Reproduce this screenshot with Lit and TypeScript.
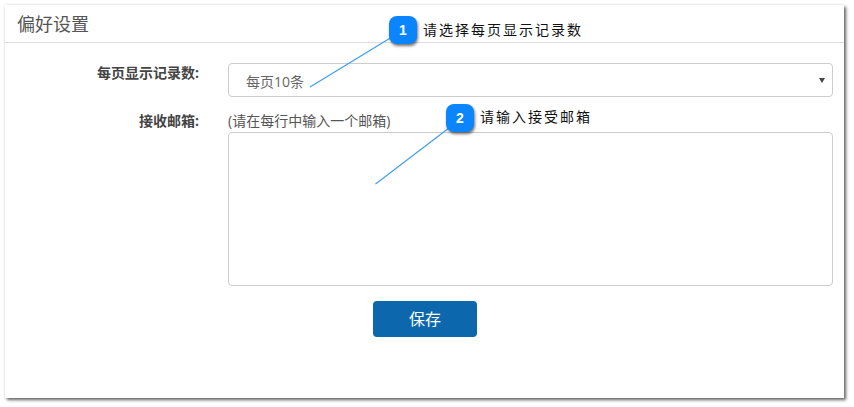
import { LitElement, html, css } from "lit";
import { customElement } from "lit/decorators.js";

@customElement("app-root")
export class AppRoot extends LitElement {
  static styles = css`
    :host { display: block; width: 854px; height: 407px; background: #fff; position: relative; overflow: hidden;
      font-family: "Open Sans", "Liberation Sans", "Noto Sans CJK SC", sans-serif; }
    .page { padding: 5px 10px 9px 5px; box-sizing: border-box; height: 407px; display: flex; }
    .card { flex: 1; background: #fff; box-shadow: 2px 2px 3px rgba(0,0,0,.6), 0 0 3px rgba(0,0,0,.12); display: flex; flex-direction: column; }
    .head { height: 38px; box-sizing: border-box; border-bottom: 1px solid #ddd; padding-left: 12px; font-size: 18px; line-height: 38px; color: #555; }
    .form { display: grid; grid-template-columns: 194px 605px; column-gap: 29px; padding-top: 20px; color: #333; font-size: 14px; }
    .label { font-weight: 700; text-align: right; color: #444; line-height: 20px; font-size: 14px; }
    .l2 { padding-top: 14px; }
    .select { height: 34px; box-sizing: border-box; border: 1px solid #ccc; border-radius: 4px; padding: 1px 7px 0 17px; color: #666; display: flex; justify-content: space-between; align-items: center; }
    .arrow { width: 0; height: 0; margin-top: -1px; border-left: 3px solid transparent; border-right: 3px solid transparent; border-top: 5px solid #444; }
    .hint { margin-top: 14px; height: 21px; line-height: 20px; color: #555; font-size: 14px; }
    .area { height: 154px; box-sizing: border-box; border: 1px solid #ccc; border-radius: 4px; }
    .actions { grid-column: 1 / 3; padding: 15px 0 0 368px; }
    .btn { display: block; width: 104px; height: 36px; box-sizing: border-box; background: #0d67ad; border: 0; border-radius: 4px; color: #fff; font: inherit; font-size: 16px; padding: 0 0 2px; }
    .lines { position: absolute; inset: 0; width: 854px; height: 407px; pointer-events: none; }
    .badge { position: absolute; width: 28px; height: 28px; box-sizing: border-box; border-radius: 8px; background: #0a84ff; color: #fff; font: 700 14px/28px "Liberation Sans", sans-serif; text-align: center; box-shadow: 1px 2px 3px rgba(0,0,0,.55); }
    .b1 { left: 389px; top: 16px; }
    .b2 { left: 446px; top: 104px; }
    .note { position: absolute; font-size: 14px; letter-spacing: 2px; color: #111; line-height: 20px; white-space: nowrap; }
    .n1 { left: 423px; top: 20px; }
    .n2 { left: 480px; top: 107px; }
  `;
  render() {
    return html`
      <div class="page">
        <div class="card">
          <div class="head">偏好设置</div>
          <div class="form">
            <div class="label">每页显示记录数:</div>
            <div class="select"><span>每页10条</span><i class="arrow"></i></div>
            <div class="label l2">接收邮箱:</div>
            <div>
              <div class="hint">(请在每行中输入一个邮箱)</div>
              <div class="area"></div>
            </div>
            <div class="actions"><button class="btn">保存</button></div>
          </div>
        </div>
      </div>
      <svg class="lines" viewBox="0 0 854 407">
        <line x1="310" y1="87" x2="392" y2="37" stroke="#3f9cf5" stroke-width="1.2" />
        <line x1="375.5" y1="184" x2="449" y2="128" stroke="#3f9cf5" stroke-width="1.2" />
      </svg>
      <div class="badge b1">1</div>
      <div class="note n1">请选择每页显示记录数</div>
      <div class="badge b2">2</div>
      <div class="note n2">请输入接受邮箱</div>
    `;
  }
}
